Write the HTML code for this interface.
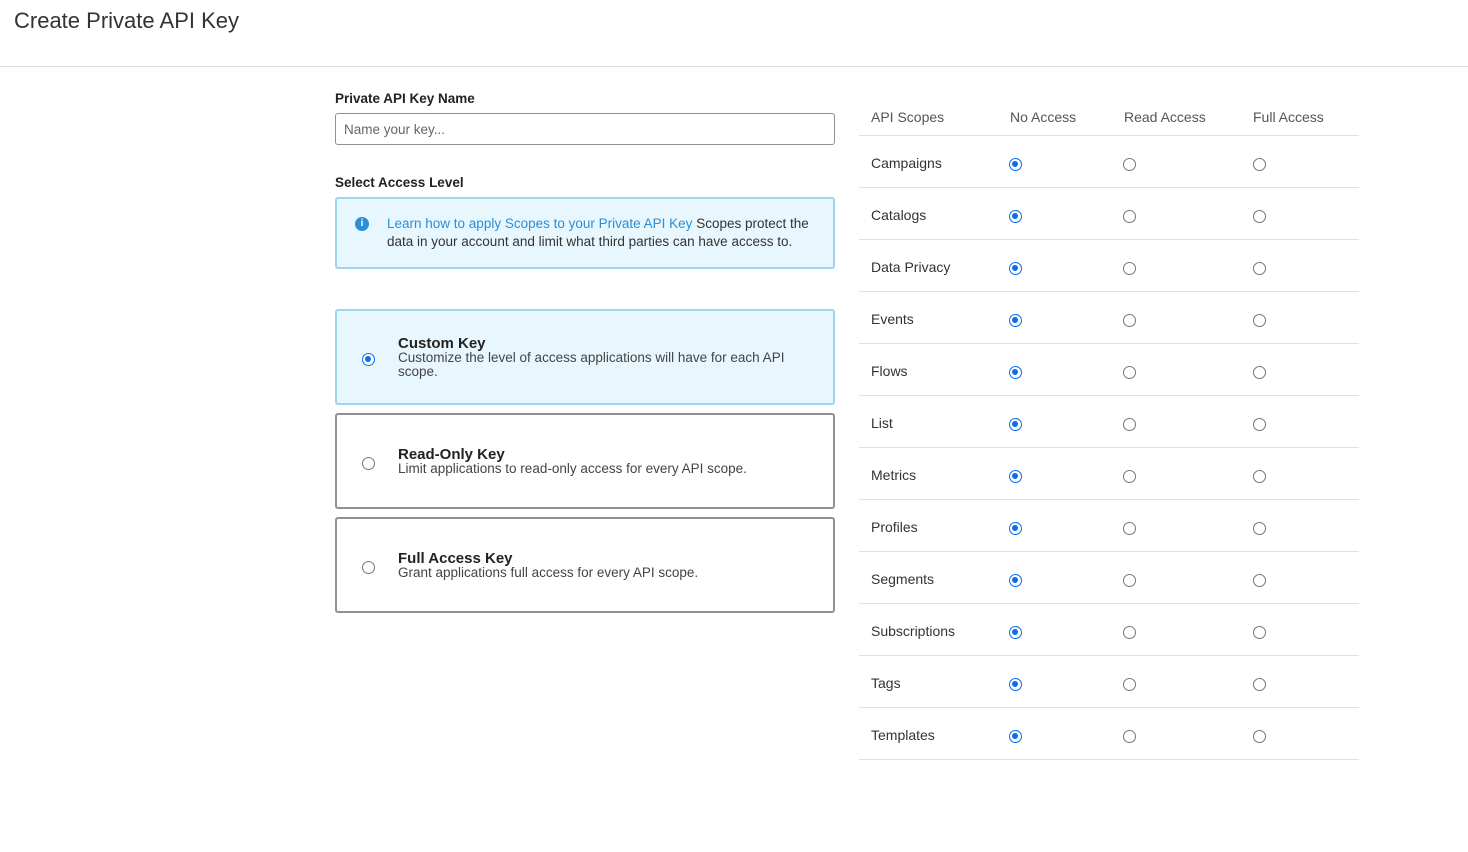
<!DOCTYPE html>
<html><head><style>
*{box-sizing:border-box;margin:0;padding:0}
body{width:1468px;height:852px;background:#fff;font-family:"Liberation Sans",sans-serif;color:#222;position:relative;overflow:hidden}
.a{position:absolute}
.r{position:absolute;width:13px;height:13px;border-radius:50%;border:1px solid #767676;background:#fff}
.r.on{border:1.5px solid #0a6cf5}
.r.on::after{content:"";position:absolute;left:2px;top:2px;width:6px;height:6px;border-radius:50%;background:#0a6cf5}
.card{position:absolute;left:335px;width:500px;border:2px solid #8e9096;border-radius:3px;background:#fff}
.card .t{position:absolute;left:61px;font-size:15px;font-weight:bold;color:#222}
.card .d{position:absolute;left:61px;font-size:13.5px;color:#444;line-height:14px;width:420px}
.row{position:absolute;left:859px;width:500px;height:52px;border-bottom:1px solid #e2e2e2}
.row span{position:absolute;left:12px;top:19px;font-size:14px;color:#333}
</style></head><body>
<div class="a" style="left:14px;top:8px;font-size:22px;color:#333">Create Private API Key</div>
<div class="a" style="left:0;top:66px;width:1468px;height:1px;background:#ddd"></div>

<div class="a" style="left:335px;top:91px;font-size:13.5px;font-weight:bold;color:#222">Private API Key Name</div>
<div class="a" style="left:335px;top:113px;width:500px;height:32px;border:1px solid #8e9096;border-radius:3px;padding:8px 8px;font-size:13.5px;color:#666">Name your key...</div>

<div class="a" style="left:335px;top:175px;font-size:13.5px;font-weight:bold;color:#222">Select Access Level</div>
<div class="a" style="left:335px;top:197px;width:500px;height:72px;border:2px solid #9fd3ef;border-radius:3px;background:#e8f7fd"></div>
<div class="a" style="left:355px;top:217px;width:14px;height:14px;border-radius:50%;background:#2a8fd8;color:#fff;font-size:10px;font-weight:bold;text-align:center;line-height:14px">i</div>
<div class="a" style="left:387px;top:215px;width:440px;font-size:13.5px;line-height:18px;color:#333"><span style="color:#2a8fd8">Learn how to apply Scopes to your Private API Key</span> Scopes protect the data in your account and limit what third parties can have access to.</div>

<div class="card" style="top:309px;height:96px;border-color:#9fd3ef;background:#e8f7fd">
<div class="r on" style="left:25px;top:42px"></div>
<div class="t" style="top:24px">Custom Key</div>
<div class="d" style="top:40px">Customize the level of access applications will have for each API scope.</div>
</div>
<div class="card" style="top:413px;height:96px">
<div class="r" style="left:25px;top:42px"></div>
<div class="t" style="top:31px">Read-Only Key</div>
<div class="d" style="top:47px">Limit applications to read-only access for every API scope.</div>
</div>
<div class="card" style="top:517px;height:96px">
<div class="r" style="left:25px;top:42px"></div>
<div class="t" style="top:31px">Full Access Key</div>
<div class="d" style="top:47px">Grant applications full access for every API scope.</div>
</div>

<div class="a" style="left:859px;top:100px;width:500px;height:36px;border-bottom:1px solid #e2e2e2;font-size:14px;color:#555">
<span class="a" style="left:12px;top:9px">API Scopes</span>
<span class="a" style="left:151px;top:9px">No Access</span>
<span class="a" style="left:265px;top:9px">Read Access</span>
<span class="a" style="left:394px;top:9px">Full Access</span>
</div>

<div class="row" style="top:136px"><span>Campaigns</span></div>
<div class="row" style="top:188px"><span>Catalogs</span></div>
<div class="row" style="top:240px"><span>Data Privacy</span></div>
<div class="row" style="top:292px"><span>Events</span></div>
<div class="row" style="top:344px"><span>Flows</span></div>
<div class="row" style="top:396px"><span>List</span></div>
<div class="row" style="top:448px"><span>Metrics</span></div>
<div class="row" style="top:500px"><span>Profiles</span></div>
<div class="row" style="top:552px"><span>Segments</span></div>
<div class="row" style="top:604px"><span>Subscriptions</span></div>
<div class="row" style="top:656px"><span>Tags</span></div>
<div class="row" style="top:708px"><span>Templates</span></div>

<div class="r on" style="left:1009px;top:158px"></div><div class="r" style="left:1123px;top:158px"></div><div class="r" style="left:1253px;top:158px"></div>
<div class="r on" style="left:1009px;top:210px"></div><div class="r" style="left:1123px;top:210px"></div><div class="r" style="left:1253px;top:210px"></div>
<div class="r on" style="left:1009px;top:262px"></div><div class="r" style="left:1123px;top:262px"></div><div class="r" style="left:1253px;top:262px"></div>
<div class="r on" style="left:1009px;top:314px"></div><div class="r" style="left:1123px;top:314px"></div><div class="r" style="left:1253px;top:314px"></div>
<div class="r on" style="left:1009px;top:366px"></div><div class="r" style="left:1123px;top:366px"></div><div class="r" style="left:1253px;top:366px"></div>
<div class="r on" style="left:1009px;top:418px"></div><div class="r" style="left:1123px;top:418px"></div><div class="r" style="left:1253px;top:418px"></div>
<div class="r on" style="left:1009px;top:470px"></div><div class="r" style="left:1123px;top:470px"></div><div class="r" style="left:1253px;top:470px"></div>
<div class="r on" style="left:1009px;top:522px"></div><div class="r" style="left:1123px;top:522px"></div><div class="r" style="left:1253px;top:522px"></div>
<div class="r on" style="left:1009px;top:574px"></div><div class="r" style="left:1123px;top:574px"></div><div class="r" style="left:1253px;top:574px"></div>
<div class="r on" style="left:1009px;top:626px"></div><div class="r" style="left:1123px;top:626px"></div><div class="r" style="left:1253px;top:626px"></div>
<div class="r on" style="left:1009px;top:678px"></div><div class="r" style="left:1123px;top:678px"></div><div class="r" style="left:1253px;top:678px"></div>
<div class="r on" style="left:1009px;top:730px"></div><div class="r" style="left:1123px;top:730px"></div><div class="r" style="left:1253px;top:730px"></div>
</body></html>
